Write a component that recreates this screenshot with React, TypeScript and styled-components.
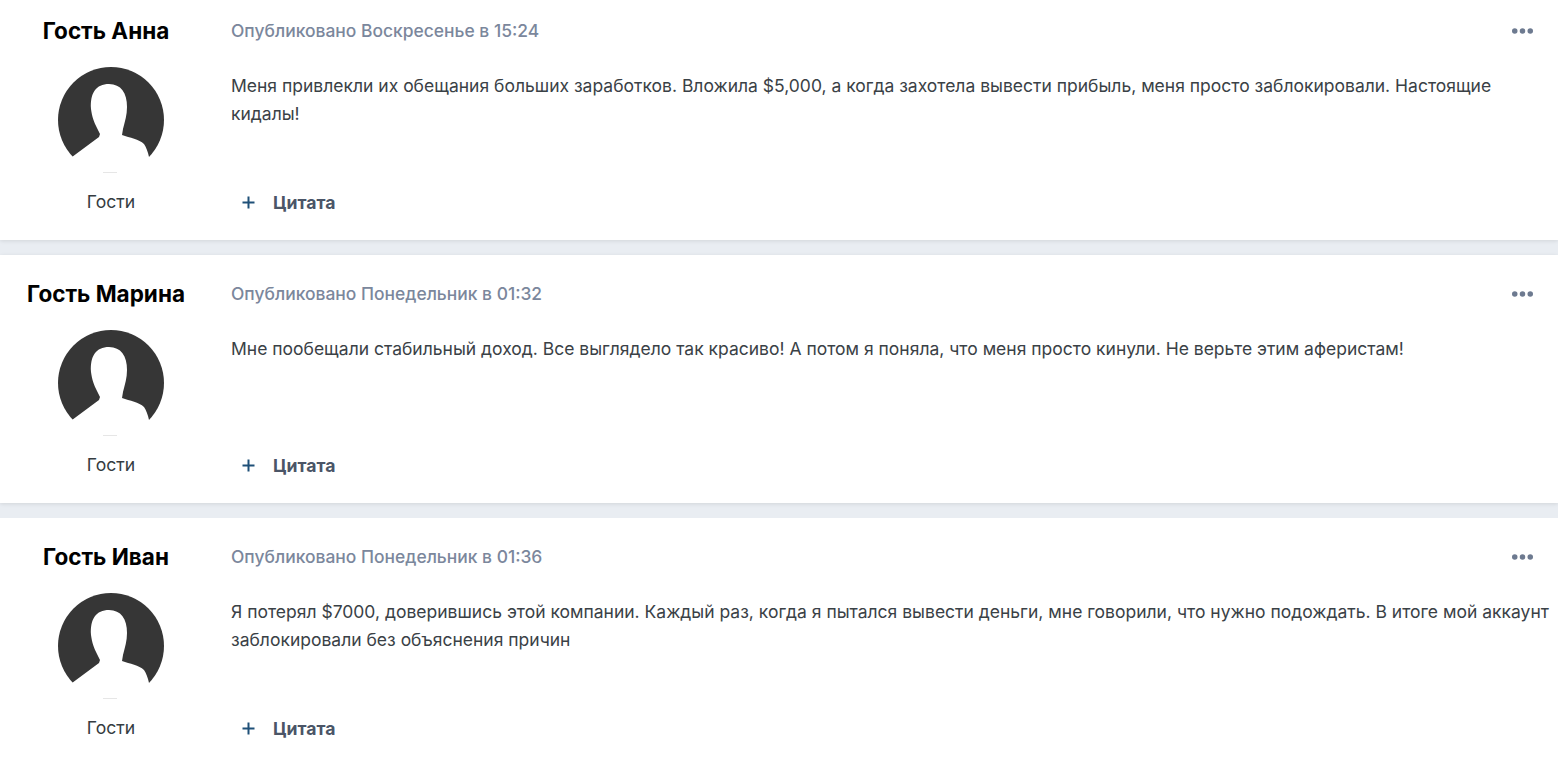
import { createGlobalStyle } from 'styled-components';
import styled from 'styled-components';

const GlobalStyle = createGlobalStyle`
  html, body {
    margin: 0;
    padding: 0;
    background: #ffffff;
    overflow: hidden;
  }
  body {
    font-family: Inter, "Liberation Sans", sans-serif;
  }
`;

// the screenshot is scrolled by 8px, so the first post is cut at the top
const Feed = styled.div`
  display: flex;
  flex-direction: column;
  gap: 15px;
  margin-top: -8px;
  background: #e9edf2;
`;

const Post = styled.article`
  display: flex;
  height: 248px;
  background: #ffffff;
  box-shadow: 0 1px 4px rgba(0, 0, 0, 0.1);
  &:last-child {
    box-shadow: none;
  }
`;

const Author = styled.aside`
  width: 222px;
  flex-shrink: 0;
  padding-top: 23px;
  display: flex;
  flex-direction: column;
  align-items: center;
`;

const AuthorName = styled.h3`
  margin: 0 10px 0 0;
  font-size: 22.5px;
  line-height: 32px;
  font-weight: 700;
  color: #000000;
`;

const Avatar = styled.svg`
  display: block;
  margin-top: 20px;
  width: 106px;
  height: 106px;
`;

const Group = styled.div`
  margin-top: 15px;
  font-size: 17.6px;
  line-height: 28px;
  color: #353c41;
`;

const Content = styled.div`
  flex: 1;
  min-width: 0;
  margin-left: 9px;
  padding: 23px 8px 24px 0;
  display: flex;
  flex-direction: column;
`;

const Meta = styled.div`
  display: flex;
  align-items: center;
  justify-content: space-between;
  height: 31px;
  margin-bottom: 1px;
  padding-right: 17px;
  font-size: 17.45px;
  font-weight: 500;
  color: #7b879c;
`;

const MoreButton = styled.svg`
  display: block;
  width: 21px;
  height: 6px;
  margin-top: 1px;
  fill: #6d7a90;
`;

const Body = styled.p`
  margin: 25px 0 0;
  font-size: 17.5px;
  line-height: 28px;
  color: #3a4146;
`;

const Actions = styled.div`
  margin-top: auto;
  display: flex;
  align-items: center;
  height: 28px;
  padding-left: 11px;
  gap: 18px;
`;

const PlusIcon = styled.svg`
  display: block;
  width: 13px;
  height: 13px;
  stroke: #1f5078;
  stroke-width: 2;
`;

const QuoteButton = styled.span`
  font-size: 17.6px;
  font-weight: 700;
  color: #4b5567;
`;

type PostData = { author: string; time: string; text: string };

const posts: PostData[] = [
  {
    author: 'Гость Анна',
    time: 'Опубликовано Воскресенье в 15:24',
    text: 'Меня привлекли их обещания больших заработков. Вложила $5,000, а когда захотела вывести прибыль, меня просто заблокировали. Настоящие кидалы!',
  },
  {
    author: 'Гость Марина',
    time: 'Опубликовано Понедельник в 01:32',
    text: 'Мне пообещали стабильный доход. Все выглядело так красиво! А потом я поняла, что меня просто кинули. Не верьте этим аферистам!',
  },
  {
    author: 'Гость Иван',
    time: 'Опубликовано Понедельник в 01:36',
    text: 'Я потерял $7000, доверившись этой компании. Каждый раз, когда я пытался вывести деньги, мне говорили, что нужно подождать. В итоге мой аккаунт заблокировали без объяснения причин',
  },
];

function GuestAvatar() {
  return (
    <Avatar viewBox="0 0 106 106">
      <circle cx="53" cy="53" r="53" fill="#363636" />
      <path
        fill="#ffffff"
        d="M14 90 L41 70 L42 67 L39 61 C36 55 34 50 33 42 C32 26 38 17 51 17 C63 17 69 26 69 40 C69 48 67 54 65 62 L64 68 C72 71 81 72 86 77 C88 80 90 85 91 90 Z"
      />
      <rect x="0" y="90" width="106" height="16" fill="#ffffff" />
      <rect x="45" y="105" width="14" height="1" fill="#e6e6e6" />
    </Avatar>
  );
}

export default function App() {
  return (
    <>
      <GlobalStyle />
      <Feed>
        {posts.map((post) => (
          <Post key={post.author}>
            <Author>
              <AuthorName>{post.author}</AuthorName>
              <GuestAvatar />
              <Group>Гости</Group>
            </Author>
            <Content>
              <Meta>
                <span>{post.time}</span>
                <MoreButton viewBox="0 0 21 6">
                  <circle cx="2.75" cy="3" r="2.75" />
                  <circle cx="10.5" cy="3" r="2.75" />
                  <circle cx="18.25" cy="3" r="2.75" />
                </MoreButton>
              </Meta>
              <Body>{post.text}</Body>
              <Actions>
                <PlusIcon viewBox="0 0 13 13">
                  <path d="M6.5 0.5 V12.5 M0.5 6.5 H12.5" />
                </PlusIcon>
                <QuoteButton>Цитата</QuoteButton>
              </Actions>
            </Content>
          </Post>
        ))}
      </Feed>
    </>
  );
}
